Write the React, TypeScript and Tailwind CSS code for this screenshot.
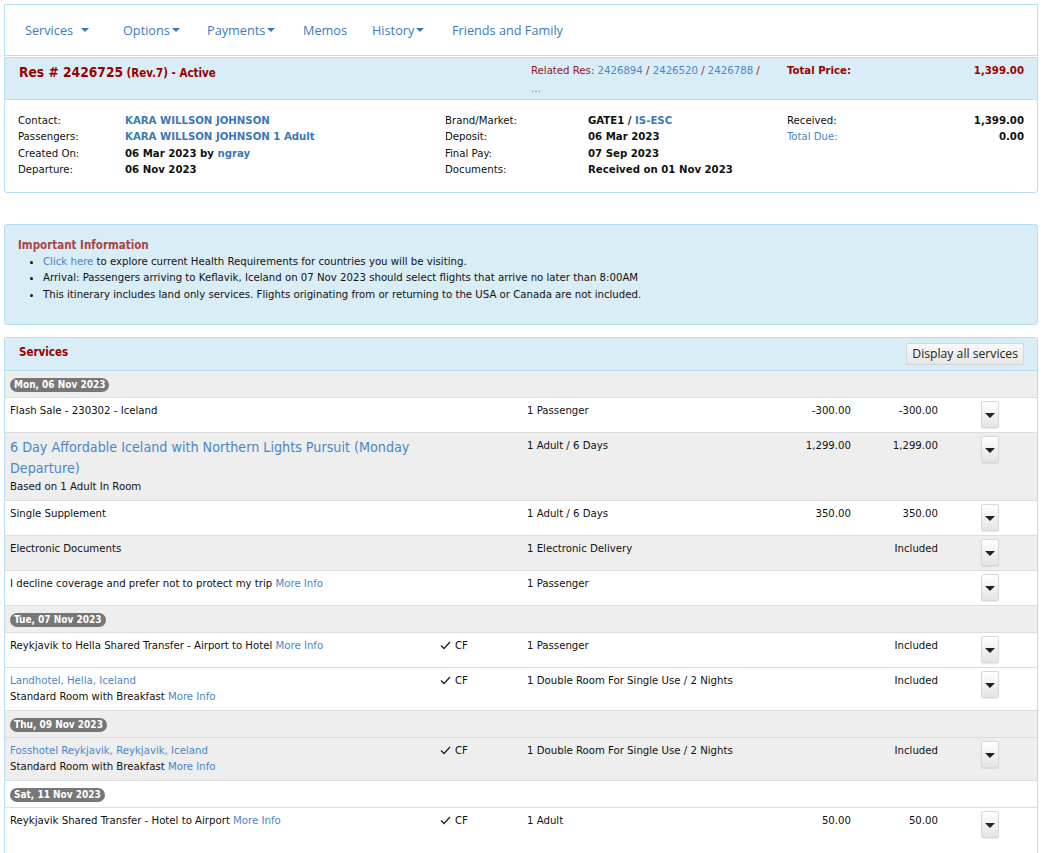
import React from "react";

const Caret = () => (
  <span className="inline-block w-0 h-0 border-t-[4px] border-t-[#337ab7] border-x-[4px] border-x-transparent align-middle ml-[2px] mb-[2px]" />
);

const Check = () => (
  <svg width="11" height="9" viewBox="0 0 11 9" className="inline-block mr-[4px] mb-[1px]">
    <polyline points="1,4.5 4,7.5 10,1" fill="none" stroke="#222" strokeWidth="1.3" />
  </svg>
);

const DropBtn = () => (
  <div className="w-[18px] h-[27px] border border-[#d8d8d8] rounded-[2px] bg-gradient-to-b from-[#ffffff] to-[#e4e4e4] flex items-center justify-center shadow-[0_1px_1px_rgba(0,0,0,0.08)]">
    <span className="w-0 h-0 border-t-[5px] border-t-[#222] border-x-[5px] border-x-transparent mt-[3px]" />
  </div>
);

const More = () => <span className="text-[#4a86c8]"> More Info</span>;

type Row =
  | { kind: "date"; label: string; gray: boolean }
  | {
      kind: "svc";
      gray: boolean;
      desc?: React.ReactNode;
      title?: React.ReactNode;
      link?: string;
      sub?: React.ReactNode;
      cf?: boolean;
      qty: string;
      price?: string;
      total?: string;
      last?: boolean;
    };

const rows: Row[] = [
  { kind: "date", label: "Mon, 06 Nov 2023", gray: true },
  { kind: "svc", gray: false, desc: "Flash Sale - 230302 - Iceland", qty: "1 Passenger", price: "-300.00", total: "-300.00" },
  {
    kind: "svc",
    gray: true,
    title: (
      <>
        6 Day Affordable Iceland with Northern Lights Pursuit (Monday
        <br />
        Departure)
      </>
    ),
    sub: "Based on 1 Adult In Room",
    qty: "1 Adult / 6 Days",
    price: "1,299.00",
    total: "1,299.00",
  },
  { kind: "svc", gray: false, desc: "Single Supplement", qty: "1 Adult / 6 Days", price: "350.00", total: "350.00" },
  { kind: "svc", gray: true, desc: "Electronic Documents", qty: "1 Electronic Delivery", total: "Included" },
  {
    kind: "svc",
    gray: false,
    desc: (
      <>
        I decline coverage and prefer not to protect my trip<More />
      </>
    ),
    qty: "1 Passenger",
  },
  { kind: "date", label: "Tue, 07 Nov 2023", gray: true },
  {
    kind: "svc",
    gray: false,
    desc: (
      <>
        Reykjavik to Hella Shared Transfer - Airport to Hotel<More />
      </>
    ),
    cf: true,
    qty: "1 Passenger",
    total: "Included",
  },
  {
    kind: "svc",
    gray: false,
    link: "Landhotel, Hella, Iceland",
    sub: (
      <>
        Standard Room with Breakfast<More />
      </>
    ),
    cf: true,
    qty: "1 Double Room For Single Use / 2 Nights",
    total: "Included",
  },
  { kind: "date", label: "Thu, 09 Nov 2023", gray: true },
  {
    kind: "svc",
    gray: true,
    link: "Fosshotel Reykjavik, Reykjavik, Iceland",
    sub: (
      <>
        Standard Room with Breakfast<More />
      </>
    ),
    cf: true,
    qty: "1 Double Room For Single Use / 2 Nights",
    total: "Included",
  },
  { kind: "date", label: "Sat, 11 Nov 2023", gray: false },
  {
    kind: "svc",
    gray: false,
    desc: (
      <>
        Reykjavik Shared Transfer - Hotel to Airport<More />
      </>
    ),
    cf: true,
    qty: "1 Adult",
    price: "50.00",
    total: "50.00",
    last: true,
  },
];

export default function App() {
  return (
    <div className="h-[853px] overflow-hidden bg-white text-[#111] font-['DejaVu_Sans_Condensed','DejaVu_Sans',sans-serif] text-[11.3px] leading-[16px] pt-[4px]">
      <div className="ml-[4px] w-[1034px]">
        {/* Nav */}
        <div className="h-[52px] border border-[#b9ddf0] bg-white flex items-center pl-[20px] font-['Open_Sans',sans-serif] text-[12.7px] text-[#3b7bbd] pb-[1px]">
          <span className="w-[98px]">Services <span className="ml-[3px]" /><Caret /></span>
          <span className="w-[84px]">Options<Caret /></span>
          <span className="w-[96px]">Payments<Caret /></span>
          <span className="w-[69px]">Memos</span>
          <span className="w-[80px]">History<Caret /></span>
          <span>Friends and Family</span>
        </div>

        {/* Reservation panel */}
        <div className="mt-[1px] border border-[#b9ddf0] rounded-b-[3px]">
          <div className="bg-[#d9edf7] border-b border-[#b9ddf0] h-[42px] flex pt-[4px]">
            <div className="w-[512px] pl-[14px] pt-[2px] text-[#990000] font-bold">
              <span className="text-[13.7px]">Res # 2426725</span>{" "}
              <span className="text-[11.5px]">(Rev.7) - Active</span>
            </div>
            <div className="w-[256px] pl-[14px] text-[#8b1a1a] leading-[18px]">
              Related Res: <span className="text-[#4a86c8]">2426894</span> /{" "}
              <span className="text-[#4a86c8]">2426520</span> /{" "}
              <span className="text-[#4a86c8]">2426788</span> /
              <br />
              <span className="text-[#4a86c8]">...</span>
            </div>
            <div className="w-[251px] pl-[14px] flex justify-between text-[#990000] font-bold leading-[18px]">
              <span>Total Price:</span>
              <span>1,399.00</span>
            </div>
          </div>
          <div className="flex pt-[13px] pb-[13px] leading-[16.4px]">
            <div className="w-[440px] pl-[13px] flex">
              <div className="w-[107px]">
                <div>Contact:</div>
                <div>Passengers:</div>
                <div>Created On:</div>
                <div>Departure:</div>
              </div>
              <div className="font-bold">
                <div className="text-[#3c78b4]">KARA WILLSON JOHNSON</div>
                <div className="text-[#3c78b4]">KARA WILLSON JOHNSON 1 Adult</div>
                <div>
                  06 Mar 2023 by <span className="text-[#3c78b4]">ngray</span>
                </div>
                <div>06 Nov 2023</div>
              </div>
            </div>
            <div className="w-[342px] flex">
              <div className="w-[143px]">
                <div>Brand/Market:</div>
                <div>Deposit:</div>
                <div>Final Pay:</div>
                <div>Documents:</div>
              </div>
              <div className="font-bold">
                <div>
                  GATE1 / <span className="text-[#3c78b4]">IS-ESC</span>
                </div>
                <div>06 Mar 2023</div>
                <div>07 Sep 2023</div>
                <div>Received on 01 Nov 2023</div>
              </div>
            </div>
            <div className="w-[237px] flex justify-between">
              <div>
                <div>Received:</div>
                <div className="text-[#4a86c8]">Total Due:</div>
              </div>
              <div className="font-bold text-right">
                <div>1,399.00</div>
                <div>0.00</div>
              </div>
            </div>
          </div>
        </div>

        {/* Important information */}
        <div className="mt-[31px] h-[101px] bg-[#d9edf7] border border-[#b9ddf0] rounded-[3px] pl-[13px] pt-[12px]">
          <div className="font-bold text-[#a94442] text-[11.5px] leading-[17px]">Important Information</div>
          <ul className="list-disc pl-[25px] leading-[16.6px]">
            <li>
              <span className="text-[#4a86c8]">Click here</span> to explore current Health Requirements for countries you will be visiting.
            </li>
            <li>Arrival: Passengers arriving to Keflavik, Iceland on 07 Nov 2023 should select flights that arrive no later than 8:00AM</li>
            <li>This itinerary includes land only services. Flights originating from or returning to the USA or Canada are not included.</li>
          </ul>
        </div>

        {/* Services */}
        <div className="mt-[12px] border border-[#b9ddf0] border-b-0 rounded-t-[3px]">
          <div className="h-[33px] bg-[#d9edf7] border-b border-[#b9ddf0] flex items-center justify-between pl-[14px] pr-[13px]">
            <span className="font-bold text-[#990000] text-[11.5px] -mt-[4px]">Services</span>
            <button className="h-[22px] px-[5px] border border-[#d5d5d5] rounded-[2px] bg-gradient-to-b from-[#fafafa] to-[#e6e6e6] text-[#222] text-[12.2px] font-['Open_Sans',sans-serif] leading-[20px]">
              Display all services
            </button>
          </div>
          {rows.map((r, i) => {
            const bg = r.gray ? "bg-[#eeeeee]" : "bg-white";
            if (r.kind === "date") {
              return (
                <div key={i} className={`${bg} border-b border-[#dddddd] h-[27px] pl-[5px] pt-[6px]`}>
                  <span className="inline-block h-[14px] leading-[14px] rounded-full bg-[#777777] text-white font-bold text-[10px] px-[4px]">
                    {r.label}
                  </span>
                </div>
              );
            }
            return (
              <div
                key={i}
                className={`${bg} ${r.last ? "min-h-[60px]" : "border-b border-[#dddddd]"} grid grid-cols-[435px_87px_233px_100px_87px_1fr] items-start`}
              >
                <div className="pl-[5px] pt-[5px] pb-[5px]">
                  {r.title && <div className="text-[14.2px] leading-[21px] text-[#4a86c8] -mt-[1px]">{r.title}</div>}
                  {r.link && <div className="text-[#4a86c8]">{r.link}</div>}
                  {r.desc && <div>{r.desc}</div>}
                  {r.sub && <div>{r.sub}</div>}
                </div>
                <div className="pt-[5px]">
                  {r.cf && (
                    <span>
                      <Check />CF
                    </span>
                  )}
                </div>
                <div className="pt-[5px]">{r.qty}</div>
                <div className="pt-[5px] pr-[9px] text-right">{r.price}</div>
                <div className="pt-[5px] pr-[9px] text-right">{r.total}</div>
                <div className="pl-[34px] pt-[3px] pb-[4px]">
                  <DropBtn />
                </div>
              </div>
            );
          })}
        </div>
      </div>
    </div>
  );
}
